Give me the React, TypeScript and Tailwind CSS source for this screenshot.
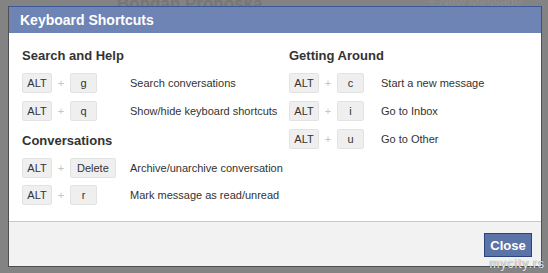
import React from 'react'

type Shortcut = { k: string; label: string }

const Key = ({ children, wide }: { children: React.ReactNode; wide?: boolean }) => (
    <span
        className={`inline-flex items-center justify-center h-[20px] rounded-[2px] border border-[#e3e3e3] bg-[#efefef] text-[11px] text-[#333] ${wide ? 'w-[30px]' : 'min-w-[27px] px-[6px]'}`}
    >
        {children}
    </span>
)

const Row = ({ s, keysWidth }: { s: Shortcut; keysWidth: string }) => (
    <div className="flex items-center h-[20px]">
        <div className={`flex items-center shrink-0 ${keysWidth}`}>
            <Key wide>ALT</Key>
            <span className="w-[18px] text-center text-[11px] text-[#c4c4c4]">+</span>
            <Key>{s.k}</Key>
        </div>
        <span className="text-[11px] text-[#333] whitespace-nowrap">{s.label}</span>
    </div>
)

const Heading = ({ children }: { children: React.ReactNode }) => (
    <h3 className="font-bold text-[13px] leading-[15px] text-[#333]">{children}</h3>
)

const search: Shortcut[] = [
    { k: 'g', label: 'Search conversations' },
    { k: 'q', label: 'Show/hide keyboard shortcuts' },
]
const convos: Shortcut[] = [
    { k: 'Delete', label: 'Archive/unarchive conversation' },
    { k: 'r', label: 'Mark message as read/unread' },
]
const around: Shortcut[] = [
    { k: 'c', label: 'Start a new message' },
    { k: 'i', label: 'Go to Inbox' },
    { k: 'u', label: 'Go to Other' },
]

export default function App() {
    return (
        <div
            className="relative w-[548px] h-[273px] overflow-hidden bg-[#838383] pt-[6px] pl-[8px]"
            style={{ fontFamily: '"Liberation Sans", Arial, sans-serif' }}
        >
            {/* page behind the overlay */}
            <div className="absolute top-[-9px] left-[117px] text-[17px] font-bold text-[#767676]">Bohdan Pronoska</div>
            <div className="absolute top-[-8px] left-[428px] text-[13px] text-[#8c8c8c]">+ New Message</div>

            <div className="relative w-[534px] h-[261px] flex flex-col border border-[#4f4f4f] border-t-0">
                <div className="h-[27px] bg-[#6d84b4] border-t border-[#3b5998] px-[11px] pt-[5px]">
                    <h2 className="text-white font-bold text-[14px] leading-[17px]">Keyboard Shortcuts</h2>
                </div>

                <div className="h-[188px] bg-white px-[13px] pt-[15px] flex">
                    <div className="w-[267px] flex flex-col">
                        <Heading>Search and Help</Heading>
                        <div className="mt-[10px] flex flex-col gap-[8px]">
                            {search.map((s) => <Row key={s.k} s={s} keysWidth="w-[108px]" />)}
                        </div>
                        <div className="mt-[12px]">
                            <Heading>Conversations</Heading>
                        </div>
                        <div className="mt-[10px] flex flex-col gap-[7px]">
                            {convos.map((s) => <Row key={s.k} s={s} keysWidth="w-[108px]" />)}
                        </div>
                    </div>
                    <div className="flex flex-col">
                        <Heading>Getting Around</Heading>
                        <div className="mt-[10px] flex flex-col gap-[8px]">
                            {around.map((s) => <Row key={s.k} s={s} keysWidth="w-[92px]" />)}
                        </div>
                    </div>
                </div>

                <div className="flex-1 bg-[#f2f2f2] border-t border-[#c9c9c9] flex items-start justify-end pr-[9px] pt-[11px]">
                    <button className="w-[48px] h-[24px] bg-[#5b74a8] border border-[#29447e] text-white font-bold text-[13px] leading-none">
                        Close
                    </button>
                </div>
            </div>

            <div
                className="absolute right-[3px] bottom-[3px] text-[12px] leading-none tracking-[1px] text-[#e8e8e8]"
                style={{ textShadow: '0 0 1px #555' }}
            >
                mycity.rs
            </div>
        </div>
    )
}
